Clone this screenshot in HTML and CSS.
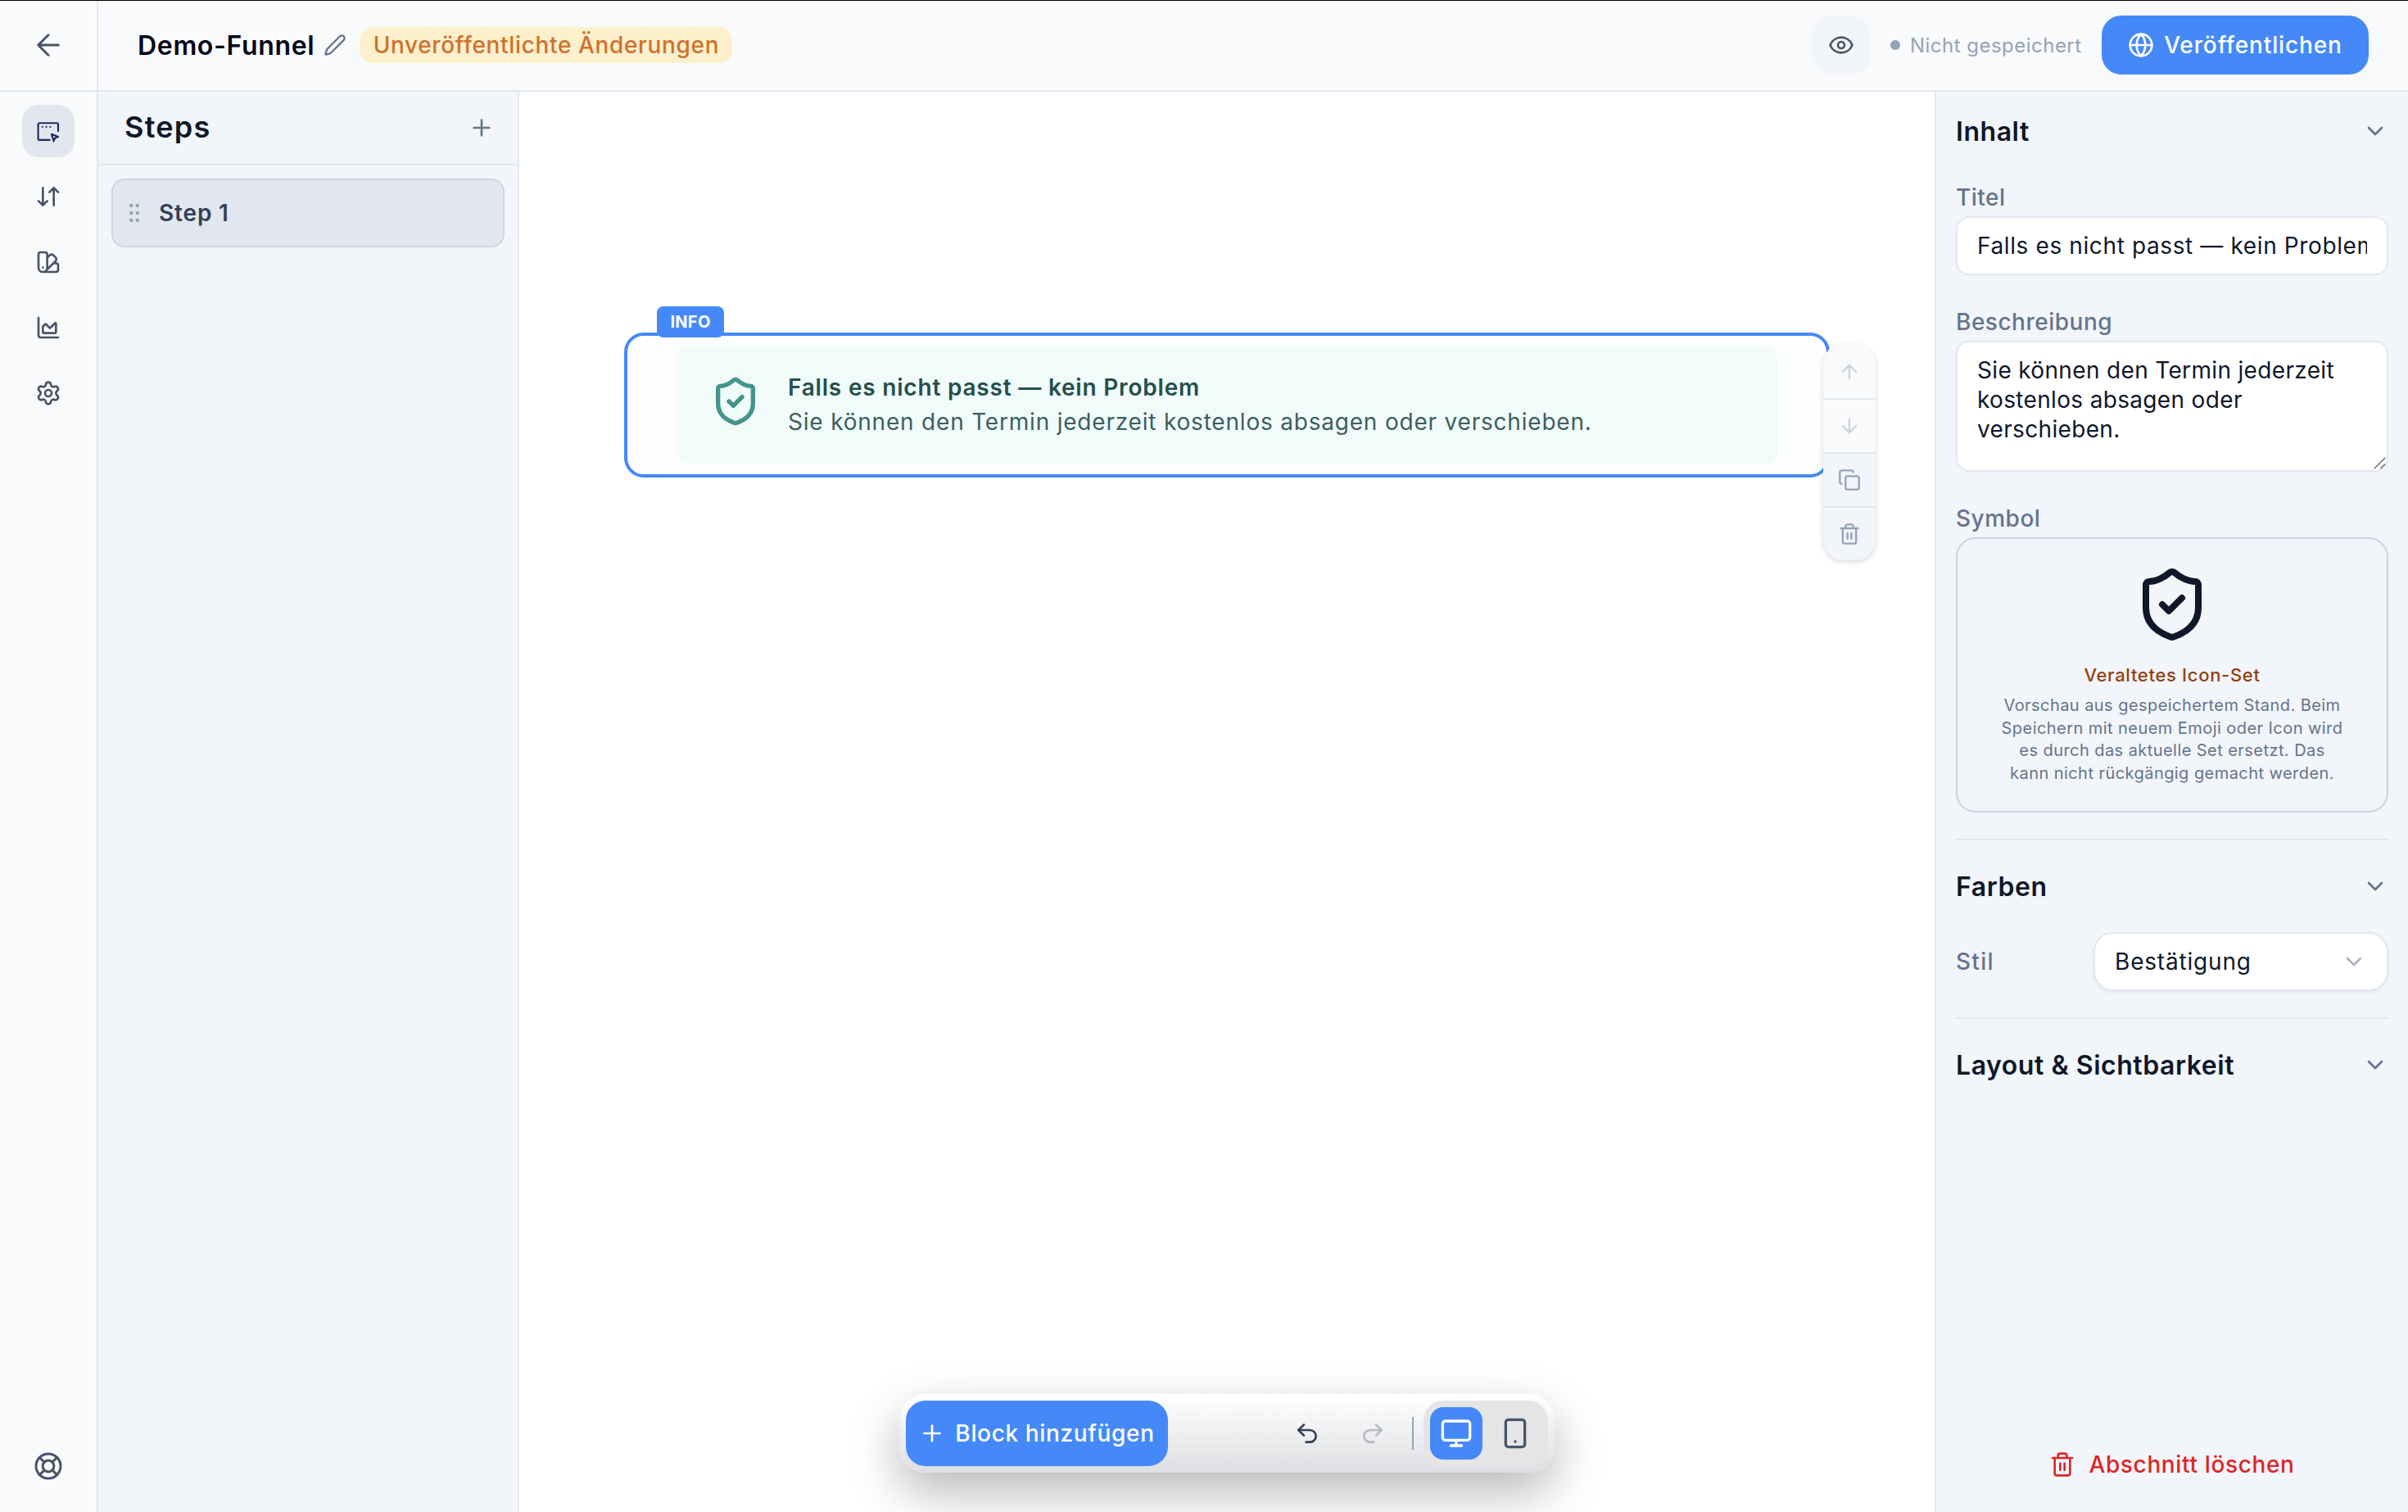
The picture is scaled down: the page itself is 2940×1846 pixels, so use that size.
FILE: index.html
```html
<!DOCTYPE html>
<html lang="de">
    <head>
        <meta charset="utf-8">
        <link rel="stylesheet" href="styles.css">
        <title>Demo-Funnel</title>
    </head>

    <body>
        <!-- Top bar -->
        <header class="topbar">
            <button class="back" type="button">
                <svg class="icon icon-back" viewBox="0 0 24 24"><path d="m12 19-7-7 7-7M19 12H5"/></svg>
            </button>
            <h1 class="funnel-name">Demo-Funnel</h1>
            <svg class="icon icon-pencil" viewBox="0 0 24 24"><path d="M21.174 6.812a1 1 0 0 0-3.986-3.987L3.842 16.174a2 2 0 0 0-.5.83l-1.321 4.352a.5.5 0 0 0 .623.622l4.353-1.32a2 2 0 0 0 .83-.497z"/></svg>
            <span class="badge">Unveröffentlichte Änderungen</span>
            <div class="topbar-actions">
                <button class="preview" type="button">
                    <svg class="icon" viewBox="0 0 24 24"><path d="M2.062 12.348a1 1 0 0 1 0-.696 10.75 10.75 0 0 1 19.876 0 1 1 0 0 1 0 .696 10.75 10.75 0 0 1-19.876 0"/><circle cx="12" cy="12" r="3"/></svg>
                </button>
                <span class="status"><i class="status-dot"></i>Nicht gespeichert</span>
                <button class="publish" type="button">
                    <svg class="icon" viewBox="0 0 24 24"><circle cx="12" cy="12" r="10"/><path d="M12 2a14.5 14.5 0 0 0 0 20 14.5 14.5 0 0 0 0-20M2 12h20"/></svg>
                    Veröffentlichen
                </button>
            </div>
        </header>

        <main class="workspace">
            <!-- Icon rail -->
            <nav class="rail">
                <button class="rail-item active" type="button">
                    <svg class="icon" viewBox="0 0 24 24"><path d="M13.2 20.2H4a1.3 1.3 0 0 1-1.3-1.3V6A1.3 1.3 0 0 1 4 4.7h15.7A1.3 1.3 0 0 1 21 6v6M6.5 8.2h.01M10.2 8.2h.01M13.8 8.2h.01M15 14.9l6 2.3-2.9 1.2-1.2 2.9z"/></svg>
                </button>
                <button class="rail-item" type="button">
                    <svg class="icon" viewBox="0 0 24 24"><path d="m3 16 4 4 4-4M7 20V4M21 8l-4-4-4 4M17 4v16"/></svg>
                </button>
                <button class="rail-item" type="button">
                    <svg class="icon" viewBox="0 0 24 24"><path d="M11 17a4 4 0 0 1-8 0V5a2 2 0 0 1 2-2h4a2 2 0 0 1 2 2ZM16.7 13H19a2 2 0 0 1 2 2v4a2 2 0 0 1-2 2H7M7 17h.01M11 8l2.3-2.3a2.4 2.4 0 0 1 3.404.004L18.6 7.6a2.4 2.4 0 0 1 .026 3.434L9.9 19.8"/></svg>
                </button>
                <button class="rail-item" type="button">
                    <svg class="icon" viewBox="0 0 24 24"><path d="M3 3v16a2 2 0 0 0 2 2h16M7 11.207a.5.5 0 0 1 .146-.353l2-2a.5.5 0 0 1 .708 0l3.292 3.292a.5.5 0 0 0 .708 0l4.292-4.292a.5.5 0 0 1 .854.353V16a1 1 0 0 1-1 1H8a1 1 0 0 1-1-1z"/></svg>
                </button>
                <button class="rail-item" type="button">
                    <svg class="icon" viewBox="0 0 24 24"><path d="M9.671 4.136a2.34 2.34 0 0 1 4.659 0 2.34 2.34 0 0 0 3.319 1.915 2.34 2.34 0 0 1 2.33 4.033 2.34 2.34 0 0 0 0 3.831 2.34 2.34 0 0 1-2.33 4.033 2.34 2.34 0 0 0-3.319 1.915 2.34 2.34 0 0 1-4.659 0 2.34 2.34 0 0 0-3.32-1.915 2.34 2.34 0 0 1-2.33-4.033 2.34 2.34 0 0 0 0-3.831A2.34 2.34 0 0 1 6.35 6.051a2.34 2.34 0 0 0 3.319-1.915"/><circle cx="12" cy="12" r="3"/></svg>
                </button>
                <button class="rail-item rail-help" type="button">
                    <svg class="icon icon-help" viewBox="0 0 24 24"><circle cx="12" cy="12" r="10"/><circle cx="12" cy="12" r="4.6"/><path d="m4.93 4.93 3.8 3.8M15.27 8.73l3.8-3.8M15.27 15.27l3.8 3.8M8.73 15.27l-3.8 3.8"/></svg>
                </button>
            </nav>

            <!-- Steps -->
            <aside class="steps">
                <div class="steps-head">
                    <h2>Steps</h2>
                    <svg class="icon" viewBox="0 0 24 24"><path d="M5 12h14M12 5v14"/></svg>
                </div>
                <div class="step">
                    <svg class="grip" viewBox="0 0 12 24"><circle cx="2.2" cy="3" r="2.2"/><circle cx="9.8" cy="3" r="2.2"/><circle cx="2.2" cy="12" r="2.2"/><circle cx="9.8" cy="12" r="2.2"/><circle cx="2.2" cy="21" r="2.2"/><circle cx="9.8" cy="21" r="2.2"/></svg>
                    Step 1
                </div>
            </aside>

            <!-- Canvas with the selected block -->
            <section class="canvas">
                <div class="block">
                    <span class="block-tag">INFO</span>
                    <div class="info">
                        <svg class="icon info-icon" viewBox="0 0 24 24"><path d="M20 13c0 5-3.5 7.5-7.66 8.95a1 1 0 0 1-.67-.01C7.5 20.5 4 18 4 13V6a1 1 0 0 1 1-1c2 0 4.5-1.2 6.24-2.72a1.17 1.17 0 0 1 1.52 0C14.51 3.81 17 5 19 5a1 1 0 0 1 1 1zM9 12l2 2 4-4"/></svg>
                        <div class="info-body">
                            <p class="info-title">Falls es nicht passt — kein Problem</p>
                            <p class="info-text">Sie können den Termin jederzeit kostenlos absagen oder verschieben.</p>
                        </div>
                    </div>
                    <div class="block-tools">
                        <button class="disabled" type="button"><svg class="icon" viewBox="0 0 24 24"><path d="m5 12 7-7 7 7M12 19V5"/></svg></button>
                        <button class="disabled" type="button"><svg class="icon" viewBox="0 0 24 24"><path d="M12 5v14M19 12l-7 7-7-7"/></svg></button>
                        <button type="button"><svg class="icon" viewBox="0 0 24 24"><rect x="8" y="8" width="14" height="14" rx="2"/><path d="M4 16c-1.1 0-2-.9-2-2V4c0-1.1.9-2 2-2h10c1.1 0 2 .9 2 2"/></svg></button>
                        <button type="button"><svg class="icon" viewBox="0 0 24 24"><path d="M10 11v6M14 11v6M19 6v14a2 2 0 0 1-2 2H7a2 2 0 0 1-2-2V6M3 6h18M8 6V4a2 2 0 0 1 2-2h4a2 2 0 0 1 2 2v2"/></svg></button>
                    </div>
                </div>

                <div class="dock">
                    <button class="add-block" type="button">
                        <svg class="icon" viewBox="0 0 24 24"><path d="M5 12h14M12 5v14"/></svg>
                        Block hinzufügen
                    </button>
                    <div class="history">
                        <svg class="icon" viewBox="0 0 24 24"><path d="M9 14 4 9l5-5"/><path d="M4 9h10.5a5.5 5.5 0 0 1 0 11H11"/></svg>
                        <svg class="icon redo" viewBox="0 0 24 24"><path d="m15 14 5-5-5-5"/><path d="M20 9H9.5a5.5 5.5 0 0 0 0 11H13"/></svg>
                    </div>
                    <div class="devices">
                        <button class="device active" type="button"><svg class="icon" viewBox="0 0 24 24"><rect x="2" y="3" width="20" height="14" rx="2"/><path d="M8 21h8M12 17v4"/></svg></button>
                        <button class="device" type="button"><svg class="icon" viewBox="0 0 24 24"><rect x="5" y="2" width="14" height="20" rx="2"/><path d="M12 18h.01"/></svg></button>
                    </div>
                </div>
            </section>

            <!-- Settings of the selected block -->
            <aside class="panel">
                <div class="panel-head first">
                    <h3>Inhalt</h3>
                    <svg class="icon" viewBox="0 0 24 24"><path d="m6 9 6 6 6-6"/></svg>
                </div>
                <div class="fields">
                    <div class="field">
                        <label>Titel</label>
                        <input class="input" type="text" value="Falls es nicht passt — kein Problem">
                    </div>
                    <div class="field">
                        <label>Beschreibung</label>
                        <div class="textarea-wrap">
                            <textarea class="input textarea">Sie können den Termin jederzeit kostenlos absagen oder verschieben.</textarea>
                            <svg class="resizer" viewBox="0 0 16 16"><path d="M1 15 15 1M9 15l6-6"/></svg>
                        </div>
                    </div>
                    <div class="field">
                        <label>Symbol</label>
                        <div class="symbol-box">
                            <svg class="icon symbol-icon" viewBox="0 0 24 24"><path d="M20 13c0 5-3.5 7.5-7.66 8.95a1 1 0 0 1-.67-.01C7.5 20.5 4 18 4 13V6a1 1 0 0 1 1-1c2 0 4.5-1.2 6.24-2.72a1.17 1.17 0 0 1 1.52 0C14.51 3.81 17 5 19 5a1 1 0 0 1 1 1zM9 12l2 2 4-4"/></svg>
                            <p class="symbol-title">Veraltetes Icon-Set</p>
                            <p class="symbol-text">Vorschau aus gespeichertem Stand. Beim Speichern mit neuem Emoji oder Icon wird es durch das aktuelle Set ersetzt. Das kann nicht rückgängig gemacht werden.</p>
                        </div>
                    </div>
                </div>

                <div class="panel-head">
                    <h3>Farben</h3>
                    <svg class="icon" viewBox="0 0 24 24"><path d="m6 9 6 6 6-6"/></svg>
                </div>
                <div class="style-row">
                    <label>Stil</label>
                    <div class="select">
                        Bestätigung
                        <svg class="icon" viewBox="0 0 24 24"><path d="m6 9 6 6 6-6"/></svg>
                    </div>
                </div>

                <div class="panel-head">
                    <h3>Layout &amp; Sichtbarkeit</h3>
                    <svg class="icon" viewBox="0 0 24 24"><path d="m6 9 6 6 6-6"/></svg>
                </div>

                <button class="delete" type="button">
                    <svg class="icon" viewBox="0 0 24 24"><path d="M10 11v6M14 11v6M19 6v14a2 2 0 0 1-2 2H7a2 2 0 0 1-2-2V6M3 6h18M8 6V4a2 2 0 0 1 2-2h4a2 2 0 0 1 2 2v2"/></svg>
                    Abschnitt löschen
                </button>
            </aside>
        </main>
    </body>
</html>
```
FILE: styles.css
```css
* {
    box-sizing: border-box;
    margin: 0;
    padding: 0;
}
body {
    display: flex;
    flex-direction: column;
    height: 100vh;
    overflow: hidden;
    border-top: 1px solid #000;
    background: #fff;
    color: #0f172a;
    font-family: Inter, 'Liberation Sans', sans-serif;
    font-size: 28px;
    letter-spacing: 0.025em;
}
button,
input,
textarea {
    font: inherit;
    letter-spacing: inherit;
    color: inherit;
    background: none;
    border: 0;
    outline: 0;
}
button {
    display: flex;
    align-items: center;
    justify-content: center;
    flex: none;
    cursor: pointer;
    white-space: nowrap;
}
.icon {
    width: 32px;
    height: 32px;
    flex: none;
    fill: none;
    stroke: currentColor;
    stroke-width: 2;
    stroke-linecap: round;
    stroke-linejoin: round;
}

/* Top bar */
.topbar {
    display: flex;
    align-items: center;
    flex: none;
    height: 111px;
    padding: 0 48px 1px 0;
    background: #f9fafc;
    border-bottom: 2px solid #e2e8f0;
}
.back {
    width: 120px;
    height: 109px;
    border-right: 2px solid #e2e8f0;
    color: #475569;
}
.icon-back {
    width: 42px;
    height: 42px;
    stroke-width: 1.75;
}
.funnel-name {
    margin-left: 48px;
    font-size: 32px;
    font-weight: 600;
    letter-spacing: 0.021em;
    color: #020617;
}
.icon-pencil {
    width: 28px;
    height: 28px;
    margin: 0 16px 0 11px;
    color: #64748b;
}
.badge {
    width: 455px;
    height: 44px;
    line-height: 45px;
    border-radius: 16px;
    text-align: center;
    white-space: nowrap;
    font-weight: 550;
    letter-spacing: 0.023em;
    color: #d0702a;
    background: #fcf0cd;
}
.topbar-actions {
    display: flex;
    align-items: center;
    margin-left: auto;
}
.preview {
    width: 72px;
    height: 72px;
    border-radius: 24px;
    color: #475569;
    background: #f2f5fa;
}
.status {
    display: flex;
    align-items: center;
    gap: 12px;
    width: 234px;
    margin: 0 24px;
    font-size: 24px;
    letter-spacing: 0.02em;
    white-space: nowrap;
    color: #94a3b8;
}
.status-dot {
    width: 12px;
    height: 12px;
    border-radius: 50%;
    background: #94a3b8;
}
.publish {
    gap: 12px;
    width: 326px;
    height: 72px;
    border-radius: 24px;
    font-weight: 550;
    letter-spacing: 0.031em;
    color: #fff;
    background: #4589f9;
}

.workspace {
    display: flex;
    flex: 1;
    min-height: 0;
}

/* Icon rail */
.rail {
    display: flex;
    flex-direction: column;
    align-items: center;
    gap: 16px;
    flex: none;
    width: 120px;
    padding: 16px 0 24px;
    background: #f9fafc;
    border-right: 2px solid #e2e8f0;
}
.rail-item {
    width: 64px;
    height: 64px;
    border-radius: 20px;
    color: #475569;
}
.rail-item.active {
    color: #1e2a5a;
    background: #e2e7ef;
}
.rail-item.active .icon {
    stroke-width: 1.6;
}
.rail-help {
    margin-top: auto;
}
.icon-help {
    width: 36px;
    height: 36px;
}

/* Steps */
.steps {
    flex: none;
    width: 514px;
    background: #f2f5fa;
    border-right: 2px solid #e2e8f0;
}
.steps-head {
    display: flex;
    align-items: center;
    justify-content: space-between;
    height: 90px;
    padding: 0 28px 0 32px;
    border-bottom: 2px solid #e2e8f0;
    color: #64748b;
}
.steps-head h2 {
    padding-bottom: 2px;
    font-size: 36px;
    font-weight: 600;
    letter-spacing: 0.035em;
    color: #0f172a;
}
.step {
    display: flex;
    align-items: center;
    gap: 24px;
    height: 84px;
    margin: 16px;
    padding-left: 20px;
    border: 2px solid #cbd5e1;
    border-radius: 16px;
    background: #e2e7ef;
    font-weight: 600;
    letter-spacing: 0.03em;
    color: #334155;
}
.grip {
    width: 12px;
    height: 24px;
    fill: #94a3b8;
}

/* Canvas */
.canvas {
    position: relative;
    flex: 1;
    min-width: 0;
    padding-top: 294px;
    overflow: hidden;
    background: #fff;
}
.block {
    position: relative;
    width: 1472px;
    height: 177px;
    margin: 0 auto;
    padding: 12px 60px;
    border: 4px solid #4589f9;
    border-radius: 24px;
    background: #fcfdff;
}
.block-tag {
    position: absolute;
    top: -36px;
    left: 36px;
    width: 82px;
    height: 38px;
    line-height: 38px;
    border-radius: 8px;
    text-align: center;
    font-size: 20px;
    font-weight: 700;
    letter-spacing: 0.015em;
    color: #fff;
    background: #4589f9;
}
.info {
    display: flex;
    align-items: center;
    gap: 32px;
    height: 145px;
    padding: 0 40px;
    border-radius: 16px;
    background: #f1fbfa;
}
.info-icon {
    width: 64px;
    height: 64px;
    margin-bottom: 10px;
    color: #42958b;
}
.info-body {
    padding-bottom: 2px;
}
.info-title,
.info-text {
    line-height: 42px;
    letter-spacing: 0.0285em;
    white-space: nowrap;
}
.info-title {
    font-weight: 600;
    color: #264f4c;
}
.info-text {
    color: #3c605e;
}
.block-tools {
    position: absolute;
    top: 10px;
    left: 1460px;
    width: 64px;
    border-radius: 24px;
    overflow: hidden;
    background: #f2f5fa;
    box-shadow: 0 2px 6px rgba(0, 0, 0, 0.15);
}
.block-tools button {
    width: 64px;
    height: 66px;
    border-top: 2px solid #e2e8f0;
    color: #94a3b8;
}
.block-tools button:first-child {
    border-top-color: #f9fafc;
}
.block-tools .icon {
    width: 28px;
    height: 28px;
}
.block-tools .disabled {
    color: #cad2de;
    background: #f9fafc;
}

/* Floating dock */
.dock {
    position: absolute;
    bottom: 48px;
    left: 464px;
    display: flex;
    align-items: center;
    width: 800px;
    height: 96px;
    padding: 8px;
    border-radius: 32px;
    background: linear-gradient(#fff, #dddfe2);
    box-shadow: 0 24px 60px rgba(0, 0, 0, 0.28);
}
.add-block {
    gap: 12px;
    width: 320px;
    height: 80px;
    border-radius: 24px;
    font-weight: 550;
    letter-spacing: 0.023em;
    color: #fff;
    background: #4589f9;
}
.history {
    display: flex;
    align-items: center;
    gap: 48px;
    height: 40px;
    margin-left: auto;
    margin-right: 12px;
    padding-right: 32px;
    border-right: 2px solid #94a3b8;
    color: #334155;
}
.history .redo {
    color: #b7bbc3;
}
.devices {
    display: flex;
    gap: 8px;
    padding: 8px;
    border-radius: 24px;
    background: #e5e5e5;
}
.device {
    width: 64px;
    height: 64px;
    border-radius: 16px;
    color: #475569;
}
.device.active {
    color: #fff;
    background: #4589f9;
}
.device .icon {
    width: 40px;
    height: 40px;
}

/* Settings panel */
.panel {
    display: flex;
    flex-direction: column;
    flex: none;
    width: 578px;
    padding: 0 24px;
    background: #f2f5fa;
    border-left: 2px solid #e2e8f0;
}
.panel-head {
    display: flex;
    align-items: center;
    justify-content: space-between;
    height: 114px;
    border-top: 2px solid #e2e8f0;
    color: #64748b;
}
.panel-head.first {
    height: 96px;
    border-top: 0;
}
.panel-head h3 {
    font-size: 32px;
    font-weight: 600;
    letter-spacing: 0.017em;
    color: #0f172a;
}
.panel label {
    display: block;
    line-height: 40px;
    font-weight: 550;
    letter-spacing: 0.018em;
    color: #64748b;
}
.field label {
    height: 40px;
    padding-top: 1px;
}
.fields {
    display: flex;
    flex-direction: column;
    gap: 36px;
    padding: 12px 0 32px;
}
.field {
    display: flex;
    flex-direction: column;
    gap: 4px;
}
.input {
    display: block;
    width: 100%;
    height: 72px;
    padding: 0 24px;
    border: 2px solid #e2e8f0;
    border-radius: 16px;
    background: #fff;
    letter-spacing: 0.022em;
}
.textarea-wrap {
    position: relative;
}
.textarea {
    height: 160px;
    padding: 16px 24px;
    line-height: 36px;
    letter-spacing: 0.012em;
    resize: none;
    overflow: hidden;
}
.resizer {
    position: absolute;
    right: 3px;
    bottom: 3px;
    width: 15px;
    height: 15px;
    fill: none;
    stroke: #666;
    stroke-width: 1.5;
}
.symbol-box {
    display: flex;
    flex-direction: column;
    align-items: center;
    height: 336px;
    padding-top: 32px;
    border: 2px solid #cbd5e1;
    border-radius: 24px;
    text-align: center;
}
.symbol-icon {
    width: 96px;
    height: 96px;
}
.symbol-title {
    margin: 22px 0 8px;
    font-size: 22px;
    font-weight: 550;
    line-height: 32px;
    letter-spacing: 0.031em;
    color: #92400e;
}
.symbol-text {
    width: 423px;
    font-size: 20px;
    line-height: 27.5px;
    letter-spacing: 0.022em;
    color: #64748b;
}
.style-row {
    display: flex;
    align-items: center;
    justify-content: space-between;
    height: 72px;
    margin-bottom: 32px;
}
.style-row label {
    letter-spacing: 0.045em;
}
.select {
    display: flex;
    align-items: center;
    justify-content: space-between;
    width: 360px;
    height: 72px;
    padding: 0 24px;
    border: 2px solid #e2e8f0;
    border-radius: 24px;
    background: #fff;
    letter-spacing: 0.029em;
    box-shadow: 0 2px 4px rgba(0, 0, 0, 0.06);
}
.select .icon {
    color: #aab4c4;
}
.delete {
    gap: 16px;
    height: 64px;
    margin: auto 0 26px;
    font-weight: 550;
    letter-spacing: 0.023em;
    color: #dc2626;
}
```
